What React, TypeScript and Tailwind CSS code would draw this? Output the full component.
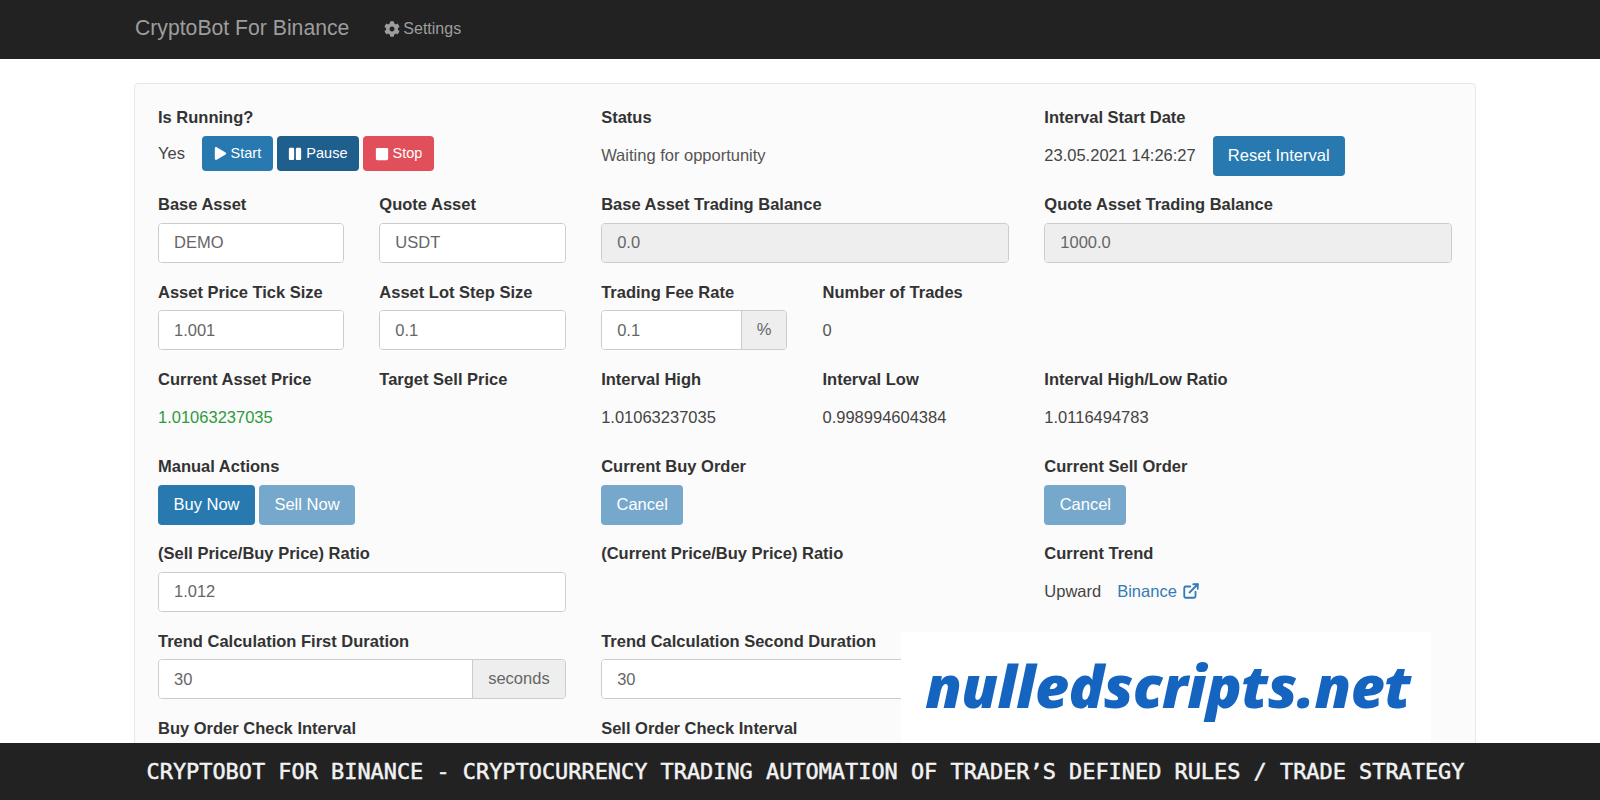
import type { ReactNode } from "react";
import { FaCog, FaPause, FaPlay, FaStop } from "react-icons/fa";
import { ExternalLink } from "lucide-react";

function Field({ label, children, className = "" }: { label: string; children?: ReactNode; className?: string }) {
  return (
    <div className={className}>
      <div className="mb-[8.5px] h-[19px] truncate text-[16.5px] leading-[19px] font-bold text-[#333]">{label}</div>
      <div className="flex h-10 items-center">{children}</div>
    </div>
  );
}

function Input({ value = "", disabled = false, suffix }: { value?: string; disabled?: boolean; suffix?: string }) {
  return (
    <div className="flex h-10 w-full overflow-hidden rounded-[4px] border border-[#ccc] shadow-[inset_0_1px_1px_rgba(0,0,0,0.075)]">
      <div className={`flex min-w-0 flex-1 items-center px-[15px] text-[16.5px] ${disabled ? "bg-[#eee] text-[#666]" : "bg-white text-[#666]"}`}>
        {value}
      </div>
      {suffix && (
        <div className="flex items-center border-l border-[#ccc] bg-[#eee] px-[15px] pb-[2px] text-[16.5px] text-[#666]">{suffix}</div>
      )}
    </div>
  );
}

function Btn({ children, className }: { children: ReactNode; className: string }) {
  return <div className={`flex items-center justify-center rounded-[4px] text-white ${className}`}>{children}</div>;
}

function Pair({ children }: { children: ReactNode }) {
  return <div className="grid grid-cols-2 gap-x-[35px]">{children}</div>;
}

export default function App() {
  return (
    <div className="relative h-[800px] overflow-hidden bg-white font-['Liberation_Sans',Arial,sans-serif]">
      <nav className="flex h-[59px] items-center bg-[#222] pl-[135px] text-[#9d9d9d]">
        <span className="-mt-[3px] text-[21.2px]">CryptoBot For Binance</span>
        <span className="ml-[35px] -mt-[2px] flex items-center gap-[3px] text-[16px]">
          <FaCog className="h-4 w-4" />
          Settings
        </span>
      </nav>

      <main className="mt-6 mr-[124px] ml-[134px] rounded-[4px] border border-[#e8e8e8] bg-[#fbfbfb] px-[23px] pt-6 pb-6">
        <div className="grid grid-cols-3 gap-x-[35.5px] gap-y-[19.75px]">
          {/* row 1 */}
          <Field label="Is Running?">
            <div className="flex items-center">
              <span className="-mt-1 mr-[16px] text-[16.5px] text-[#444]">Yes</span>
              <div className="-mt-1 ml-[1px] flex gap-[4px] text-[14.5px]">
                <Btn className="h-[35px] w-[71px] gap-1 bg-[#2779b0]"><FaPlay className="h-[13px] w-[13px]" />Start</Btn>
                <Btn className="h-[35px] w-[82px] gap-1 bg-[#1f5f8e]"><FaPause className="h-[14px] w-[14px]" />Pause</Btn>
                <Btn className="h-[35px] w-[71px] gap-1 bg-[#e14f5b]"><FaStop className="h-[14px] w-[14px]" />Stop</Btn>
              </div>
            </div>
          </Field>
          <Field label="Status"><span className="text-[16.5px] text-[#555]">Waiting for opportunity</span></Field>
          <Field label="Interval Start Date">
            <span className="text-[16.5px] text-[#444]">23.05.2021 14:26:27</span>
            <Btn className="ml-[17px] h-10 w-[132px] bg-[#2779b0] text-[16.5px]">Reset Interval</Btn>
          </Field>

          {/* row 2 */}
          <Pair>
            <Field label="Base Asset"><Input value="DEMO" /></Field>
            <Field label="Quote Asset"><Input value="USDT" /></Field>
          </Pair>
          <Field label="Base Asset Trading Balance"><Input value="0.0" disabled /></Field>
          <Field label="Quote Asset Trading Balance"><Input value="1000.0" disabled /></Field>

          {/* row 3 */}
          <Pair>
            <Field label="Asset Price Tick Size"><Input value="1.001" /></Field>
            <Field label="Asset Lot Step Size"><Input value="0.1" /></Field>
          </Pair>
          <Pair>
            <Field label="Trading Fee Rate"><Input value="0.1" suffix="%" /></Field>
            <Field label="Number of Trades"><span className="text-[16.5px] text-[#555]">0</span></Field>
          </Pair>
          <div />

          {/* row 4 */}
          <Pair>
            <Field label="Current Asset Price"><span className="text-[16.5px] text-[#2e9a3e]">1.01063237035</span></Field>
            <Field label="Target Sell Price" />
          </Pair>
          <Pair>
            <Field label="Interval High"><span className="text-[16.5px] text-[#444]">1.01063237035</span></Field>
            <Field label="Interval Low"><span className="text-[16.5px] text-[#444]">0.998994604384</span></Field>
          </Pair>
          <Field label="Interval High/Low Ratio"><span className="text-[16.5px] text-[#444]">1.0116494783</span></Field>

          {/* row 5 */}
          <Field label="Manual Actions">
            <div className="flex gap-[4px] text-[16.5px]">
              <Btn className="h-10 w-[97px] bg-[#2779b0]">Buy Now</Btn>
              <Btn className="h-10 w-[96px] bg-[#76a8cc]">Sell Now</Btn>
            </div>
          </Field>
          <Field label="Current Buy Order"><Btn className="h-10 w-[82px] bg-[#76a8cc] text-[16.5px]">Cancel</Btn></Field>
          <Field label="Current Sell Order"><Btn className="h-10 w-[82px] bg-[#76a8cc] text-[16.5px]">Cancel</Btn></Field>

          {/* row 6 */}
          <Field label="(Sell Price/Buy Price) Ratio"><Input value="1.012" /></Field>
          <Field label="(Current Price/Buy Price) Ratio" />
          <Field label="Current Trend">
            <span className="text-[16.5px] text-[#444]">Upward</span>
            <a className="ml-4 flex items-center gap-[5px] text-[16.5px] text-[#337ab7]">
              Binance
              <ExternalLink strokeWidth={2.4} className="-mt-[2px] h-[18px] w-[18px]" />
            </a>
          </Field>

          {/* row 7 */}
          <Field label="Trend Calculation First Duration"><Input value="30" suffix="seconds" /></Field>
          <Field label="Trend Calculation Second Duration"><Input value="30" /></Field>
          <div />

          {/* row 8 */}
          <Field label="Buy Order Check Interval"><Input /></Field>
          <Field label="Sell Order Check Interval"><Input /></Field>
          <div />
        </div>
      </main>

      {/* watermark */}
      <div className="absolute top-[632px] left-[901px] flex h-[111px] w-[530px] items-center justify-center bg-white pb-1 pl-[4px] font-['Open_Sans',sans-serif] text-[59px] font-extrabold tracking-[-0.5px] text-[#1565c0] italic">
        nulledscripts.net
      </div>

      {/* caption bar */}
      <div className="absolute right-0 bottom-0 left-0 flex h-[57px] items-center justify-center bg-[#222] pt-[2px] pl-[11px] font-['DejaVu_Sans_Mono',monospace] text-[21.9px] font-normal whitespace-nowrap text-[#f2f2f2] [-webkit-text-stroke:0.5px_#f2f2f2]">
        CRYPTOBOT FOR BINANCE - CRYPTOCURRENCY TRADING AUTOMATION OF TRADER’S DEFINED RULES / TRADE STRATEGY
      </div>
    </div>
  );
}
